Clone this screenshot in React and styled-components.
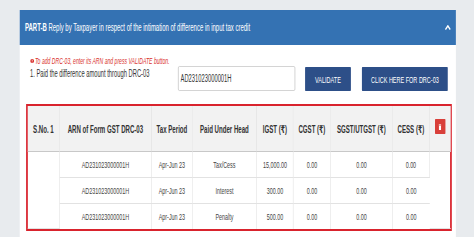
import React from 'react';
import styled, { createGlobalStyle } from 'styled-components';

// the reference is a horizontally squeezed screenshot, so the stage is laid out
// wide and squeezed back with one scaleX
const S = 0.58;
const w = v => `${(v / S).toFixed(2)}px`;

const GlobalStyle = createGlobalStyle`
  html, body {
    margin: 0;
    padding: 0;
    background: #e8ebee;
    overflow: hidden;
  }
  body {
    font-family: "Liberation Sans", Arial, "DejaVu Sans", sans-serif;
  }
`;

const Stage = styled.div`
  width: ${w(474)};
  height: 237px;
  box-sizing: border-box;
  padding: 10px 0 0 ${w(20)};
  transform: scaleX(${S});
  transform-origin: 0 0;
`;

const Panel = styled.section`
  width: ${w(436)};
  height: 227px;
  background: #fff;
`;

const Header = styled.header`
  height: 35px;
  display: flex;
  align-items: center;
  justify-content: space-between;
  padding: 0 ${w(5)} 0 ${w(5)};
  background: #3472b3;
  color: #fff;
  font-size: 10.3px;
`;

const Title = styled.div`
  white-space: nowrap;
  b {
    font-weight: bold;
  }
`;

const Body = styled.div`
  padding: 10px 0 0 ${w(6)};
`;

const Note = styled.div`
  display: flex;
  align-items: center;
  gap: ${w(1)};
  height: 11px;
  padding-left: ${w(4)};
  font-size: 8.8px;
  font-style: italic;
  color: #d9302c;
  white-space: nowrap;
`;

const Row = styled.div`
  display: flex;
  align-items: flex-start;
  height: 25px;
  padding-left: ${w(4)};
`;

const Label = styled.div`
  width: ${w(148)};
  padding-top: 1px;
  font-size: 10px;
  line-height: 14px;
  color: #333;
  white-space: nowrap;
`;

const Input = styled.input`
  width: ${w(117)};
  height: 25px;
  box-sizing: border-box;
  margin: 0;
  padding: 0 ${w(2)};
  border: 1px solid #c9c9c9;
  border-left-width: ${w(1)};
  border-right-width: ${w(1)};
  border-radius: 2px;
  font-family: inherit;
  font-size: 10px;
  color: #333;
  outline: none;
`;

const Button = styled.button`
  width: ${p => w(p.$w)};
  height: 24px;
  margin: 1px 0 0 ${p => w(p.$gap)};
  padding: 0;
  border: none;
  border-radius: 1px;
  background: #2d4f88;
  color: #fff;
  font-family: inherit;
  font-size: 9.5px;
  white-space: nowrap;
`;

const TableBox = styled.div`
  width: ${w(426)};
  margin-top: 13px;
  box-sizing: border-box;
  border: 2px solid #d9232d;
  border-left-width: ${w(2)};
  border-right-width: ${w(2)};
`;

const Table = styled.table`
  width: 100%;
  border-collapse: separate;
  border-spacing: 0;
  table-layout: fixed;
`;

const Col = styled.col`
  width: ${p => w(p.$w)};
`;

const Th = styled.th`
  height: 45px;
  padding: 0;
  background: #f2f2f2;
  border-right: ${w(1)} solid #dcdcdc;
  border-bottom: 1px solid #c8c8c8;
  color: #333;
  font-size: 10.5px;
  font-weight: bold;
  text-align: center;
  white-space: nowrap;
  &:last-child {
    border-right: none;
  }
`;

const Td = styled.td`
  height: 25px;
  padding: 0;
  border-right: ${w(1)} solid #e2e2e2;
  border-bottom: 1px solid #e2e2e2;
  color: #444;
  font-size: 9.3px;
  text-align: center;
  white-space: nowrap;
  tr:last-child > & {
    border-bottom: none;
  }
  &:last-child {
    border-right: none;
  }
`;

const DeleteButton = styled.span`
  display: inline-flex;
  align-items: center;
  justify-content: center;
  width: ${w(10)};
  height: 15px;
  margin-top: -6px;
  background: #d9403a;
  border-radius: 1px;
  vertical-align: middle;
`;

const Chevron = () => (
  <svg width={w(6)} height="5" viewBox="0 0 10 6" preserveAspectRatio="none">
    <polyline points="1,5.5 5,1 9,5.5" fill="none" stroke="#fff" strokeWidth="2" />
  </svg>
);

const AlertIcon = () => (
  <svg width={w(4)} height="4" viewBox="0 0 10 10" preserveAspectRatio="none">
    <circle cx="5" cy="5" r="5" fill="#d9302c" />
    <rect x="4.2" y="2" width="1.6" height="4" fill="#fff" />
    <rect x="4.2" y="7" width="1.6" height="1.4" fill="#fff" />
  </svg>
);

const TrashIcon = () => (
  <svg width={w(3)} height="6" viewBox="0 0 6 10" preserveAspectRatio="none">
    <rect x="0" y="1" width="6" height="1.2" fill="#fff" />
    <rect x="2" y="0" width="2" height="1.2" fill="#fff" />
    <rect x="0.8" y="2.8" width="4.4" height="7.2" fill="#fff" />
  </svg>
);

const rows = [
  { arn: 'AD231023000001H', period: 'Apr-Jun 23', head: 'Tax/Cess', igst: '15,000.00' },
  { arn: 'AD231023000001H', period: 'Apr-Jun 23', head: 'Interest', igst: '300.00' },
  { arn: 'AD231023000001H', period: 'Apr-Jun 23', head: 'Penalty', igst: '500.00' },
];

const widths = [32, 92, 41, 64, 37, 37, 62, 37, 21];

const App = () => {
  return (
    <>
      <GlobalStyle />
      <Stage>
        <Panel>
          <Header>
            <Title>
              <b>PART-B</b> Reply by Taxpayer in respect of the intimation of difference in input tax credit
            </Title>
            <Chevron />
          </Header>
          <Body>
            <Note>
              <AlertIcon />
              To add DRC-03, enter its ARN and press VALIDATE button.
            </Note>
            <Row>
              <Label>1. Paid the difference amount through DRC-03</Label>
              <Input readOnly defaultValue="AD231023000001H" />
              <Button $w={46} $gap={10}>VALIDATE</Button>
              <Button $w={86} $gap={11}>CLICK HERE FOR DRC-03</Button>
            </Row>
            <TableBox>
              <Table>
                <colgroup>
                  {widths.map((v, i) => (
                    <Col key={i} $w={v} />
                  ))}
                </colgroup>
                <thead>
                  <tr>
                    <Th>S.No. 1</Th>
                    <Th>ARN of Form GST DRC-03</Th>
                    <Th>Tax Period</Th>
                    <Th>Paid Under Head</Th>
                    <Th>IGST (₹)</Th>
                    <Th>CGST (₹)</Th>
                    <Th>SGST/UTGST (₹)</Th>
                    <Th>CESS (₹)</Th>
                    <Th>
                      <DeleteButton>
                        <TrashIcon />
                      </DeleteButton>
                    </Th>
                  </tr>
                </thead>
                <tbody>
                  {rows.map((r, i) => (
                    <tr key={i}>
                      {i === 0 && <Td rowSpan={3} />}
                      <Td>{r.arn}</Td>
                      <Td>{r.period}</Td>
                      <Td>{r.head}</Td>
                      <Td>{r.igst}</Td>
                      <Td>0.00</Td>
                      <Td>0.00</Td>
                      <Td>0.00</Td>
                      {i === 0 && <Td rowSpan={3} />}
                    </tr>
                  ))}
                </tbody>
              </Table>
            </TableBox>
          </Body>
        </Panel>
      </Stage>
    </>
  );
};

export default App;
